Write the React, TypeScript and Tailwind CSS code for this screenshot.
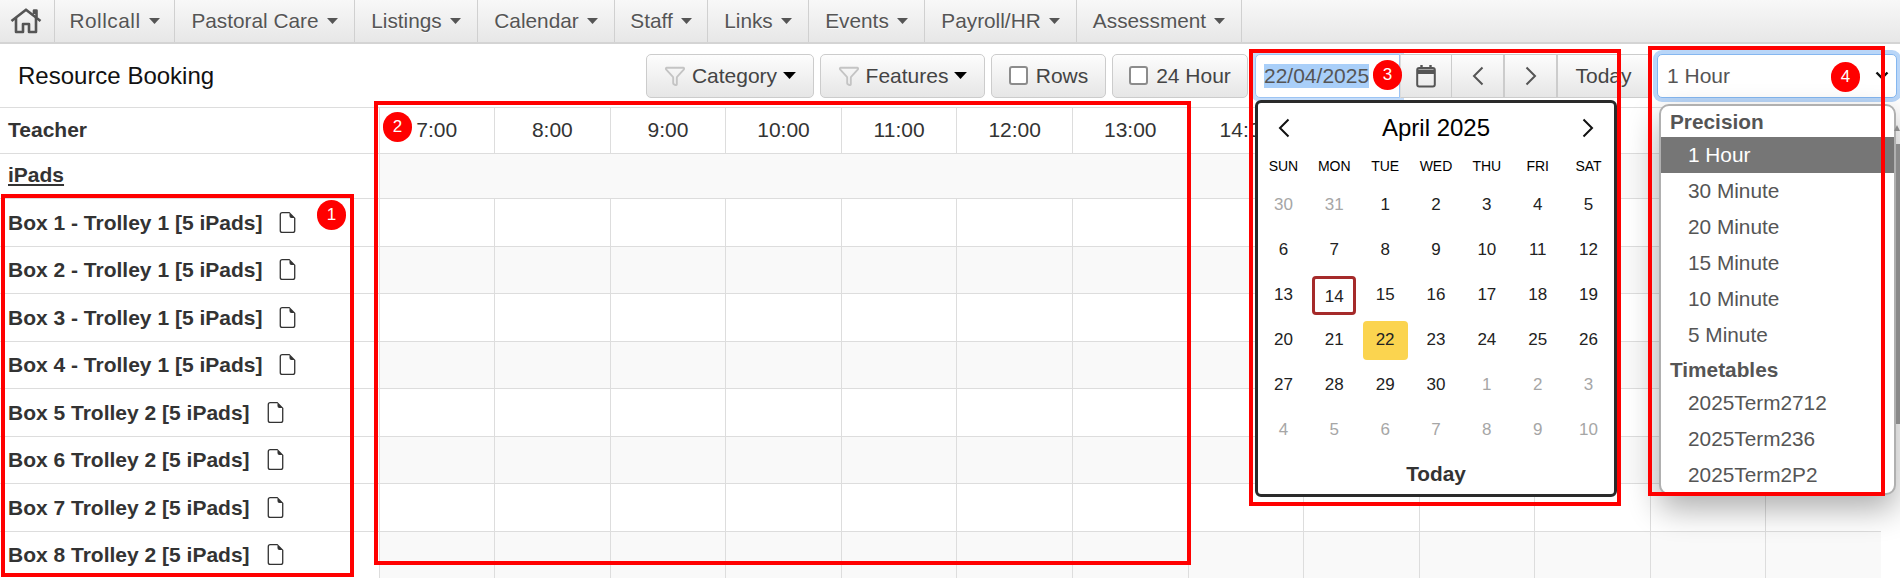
import { BsFileEarmark } from 'react-icons/bs';
import { Funnel } from 'lucide-react';

const navItems = [
  { label: 'Rollcall', width: 'w-[120px]', extra: 'tracking-[0.5px]' },
  { label: 'Pastoral Care', width: 'w-[180px]', extra: '' },
  { label: 'Listings', width: 'w-[123px]', extra: '' },
  { label: 'Calendar', width: 'w-[137px]', extra: '' },
  { label: 'Staff', width: 'w-[93px]', extra: '' },
  { label: 'Links', width: 'w-[101px]', extra: '' },
  { label: 'Events', width: 'w-[116px]', extra: '' },
  { label: 'Payroll/HR', width: 'w-[152px]', extra: '' },
  { label: 'Assessment', width: 'w-[165px]', extra: '' },
];

const hours = [7, 8, 9, 10, 11, 12, 13, 14, 15, 16, 17, 18, 19];

const resources = [
  'Box 1 - Trolley 1 [5 iPads]',
  'Box 2 - Trolley 1 [5 iPads]',
  'Box 3 - Trolley 1 [5 iPads]',
  'Box 4 - Trolley 1 [5 iPads]',
  'Box 5 Trolley 2 [5 iPads]',
  'Box 6 Trolley 2 [5 iPads]',
  'Box 7 Trolley 2 [5 iPads]',
  'Box 8 Trolley 2 [5 iPads]',
];

const weekDays = ['SUN', 'MON', 'TUE', 'WED', 'THU', 'FRI', 'SAT'];

const calendarDays = [
  [30, true], [31, true], [1, false], [2, false], [3, false], [4, false], [5, false],
  [6, false], [7, false], [8, false], [9, false], [10, false], [11, false], [12, false],
  [13, false], [14, false], [15, false], [16, false], [17, false], [18, false], [19, false],
  [20, false], [21, false], [22, false], [23, false], [24, false], [25, false], [26, false],
  [27, false], [28, false], [29, false], [30, false], [1, true], [2, true], [3, true],
  [4, true], [5, true], [6, true], [7, true], [8, true], [9, true], [10, true],
] as [number, boolean][];

const buttonClass =
  'flex h-[44px] items-center rounded-[5px] border border-[#ccc] bg-linear-to-b from-[#fdfdfd] to-[#e6e6e6] text-[#444]';

function Caret({ color, wide }: { color: string; wide?: boolean }) {
  return (
    <svg width={wide ? 13 : 11} height={wide ? 7 : 6} viewBox="0 0 11 6" className="shrink-0">
      <path d="M0 0h11L5.5 6z" fill={color} />
    </svg>
  );
}

function Chevron({ left, color = '#333' }: { left?: boolean; color?: string }) {
  return (
    <svg width="12" height="20" viewBox="0 0 12 20" fill="none">
      <path
        d={left ? 'M10.5 1.5 2 10l8.5 8.5' : 'M1.5 1.5 10 10l-8.5 8.5'}
        stroke={color}
        strokeWidth="2"
      />
    </svg>
  );
}

function Checkbox() {
  return <span className="block h-[19px] w-[19px] rounded-[3px] border-2 border-[#8c8c8c] bg-white" />;
}

function Badge({ n, className }: { n: number; className: string }) {
  return (
    <div
      className={`absolute z-40 flex h-[30px] w-[29px] items-center justify-center rounded-full bg-[#f00] text-[17px] text-white ${className}`}
    >
      {n}
    </div>
  );
}

function CalendarPopup() {
  return (
    <div className="absolute left-0 top-[46px] z-20 h-[397px] w-[362px] rounded-[6px] border-[3px] border-[#2a2a2a] bg-white">
      <div className="flex h-[50px] items-center justify-between pl-[20px] pr-[20px] text-[24px] text-black">
        <Chevron left color="#111" />
        <span>April 2025</span>
        <Chevron color="#111" />
      </div>
      <div className="grid h-[28px] grid-cols-7 items-center text-center text-[14px] text-black">
        {weekDays.map((d) => (
          <span key={d}>{d}</span>
        ))}
      </div>
      <div className="mt-[2px] grid auto-rows-[45px] grid-cols-7 text-[17px] text-[#222]">
        {calendarDays.map(([day, muted], i) => (
          <div key={i} className="flex items-center justify-center">
            {i === 15 ? (
              <span className="flex h-[39px] w-[44px] items-center justify-center rounded-[4px] border-[3px] border-[#a52a2a] pt-[3px]">
                {day}
              </span>
            ) : i === 23 ? (
              <span className="flex h-[39px] w-[45px] items-center justify-center rounded-[4px] bg-[#fbd44f]">{day}</span>
            ) : (
              <span className={muted ? 'text-[#a6a6a6]' : ''}>{day}</span>
            )}
          </div>
        ))}
      </div>
      <div className="flex h-[42px] items-center justify-center text-[20.8px] font-bold text-[#333]">Today</div>
    </div>
  );
}

function SelectPopup() {
  const item = 'flex h-[36px] items-center pl-[27px]';
  const group = 'flex items-center pl-[9px] pt-[2px] font-bold';
  return (
    <div className="absolute left-[2px] top-[50px] z-20 h-[391px] w-[237px] rounded-[10px] border-2 border-[#b0b0b0] bg-white text-[20.8px] text-[#555] shadow-[0_14px_32px_rgba(0,0,0,0.32)]">
      <div className={`${group} h-[31px]`}>Precision</div>
      <div className={`${item} bg-[#767676] text-white`}>1 Hour</div>
      <div className={item}>30 Minute</div>
      <div className={item}>20 Minute</div>
      <div className={item}>15 Minute</div>
      <div className={item}>10 Minute</div>
      <div className={item}>5 Minute</div>
      <div className={`${group} h-[32px]`}>Timetables</div>
      <div className={item}>2025Term2712</div>
      <div className={item}>2025Term236</div>
      <div className={item}>2025Term2P2</div>
      {/* native scrollbar peeking out on the right */}
      <svg width="6" height="6" viewBox="0 0 6 6" className="absolute -right-[6px] top-[19px]">
        <path d="M0 6 3 0l3 6z" fill="#8a8a8a" />
      </svg>
      <div className="absolute -right-[6px] top-[38px] h-[280px] w-[4px] bg-[#8a8a8a]" />
    </div>
  );
}

export default function App() {
  return (
    <div className="relative h-[580px] w-full overflow-hidden bg-white font-['Liberation_Sans',Arial,sans-serif] text-[21px] text-[#333]">
      {/* Top nav */}
      <nav className="flex h-[44px] border-b-2 border-[#d4d4d4] bg-linear-to-b from-[#f8f8f8] to-[#e7e7e7] text-[20.8px] text-[#555] [text-shadow:0_1px_0_rgba(255,255,255,0.8)]">
        <div className="flex w-[55px] items-center justify-center border-r border-[#d0d0d0] pr-[3px]">
          <svg width="32" height="26" viewBox="0 0 32 26" fill="none" stroke="#555" strokeWidth="2.6" strokeLinejoin="round">
            <path d="M1.5 13 16 1.7 30.5 13" />
            <path d="M24 6V2.5h2.5V9" />
            <path d="M6 10v14h7v-8h6v8h7V10" />
          </svg>
        </div>
        {navItems.map((n) => (
          <div key={n.label} className={`flex items-center justify-center gap-[8px] border-r border-[#d0d0d0] ${n.width}`}>
            <span className={n.extra}>{n.label}</span>
            <Caret color="#555" />
          </div>
        ))}
      </nav>

      {/* Toolbar */}
      <div className="flex h-[63px] items-center justify-between pl-[18px] pr-[3px]">
        <h1 className="text-[24px] text-[#111]">Resource Booking</h1>
        <div className="flex items-center">
          <div className={`${buttonClass} w-[168px] justify-center gap-[6px] text-[#333]`}>
            <Funnel size={22} color="#c4c4c4" strokeWidth={2} />
            <span>Category</span>
            <Caret color="#000" wide />
          </div>
          <div className={`${buttonClass} ml-[6px] w-[165px] justify-center gap-[6px] text-[#333]`}>
            <Funnel size={22} color="#c4c4c4" strokeWidth={2} />
            <span>Features</span>
            <Caret color="#000" wide />
          </div>
          <div className={`${buttonClass} ml-[6px] w-[115px] justify-center gap-[8px]`}>
            <Checkbox />
            <span>Rows</span>
          </div>
          <div className={`${buttonClass} ml-[6px] w-[136px] justify-center gap-[8px]`}>
            <Checkbox />
            <span>24 Hour</span>
          </div>

          {/* Date picker group */}
          <div className="relative ml-[7px] flex">
            <div className="flex h-[44px] w-[145px] items-center rounded-l-[5px] border border-[#9cc4f4] bg-white pl-[8px] text-[#555] shadow-[0_0_0_4px_#c4dcf9]">
              <span className="bg-[#a9cff9] leading-[24px]">22/04/2025</span>
            </div>
            <div className={`${buttonClass} relative z-10 w-[52px] justify-center rounded-none border-l-[#ddd]`}>
              <svg width="20" height="24" viewBox="0 0 20 24" fill="none">
                <rect x="1.2" y="4" width="17.6" height="18.5" rx="2" stroke="#555" strokeWidth="2" />
                <path d="M1.2 5.5h17.6v4.5H1.2z" fill="#555" />
                <path d="M5.5 1v4M14.5 1v4" stroke="#555" strokeWidth="2.4" />
              </svg>
            </div>
            <div className={`${buttonClass} relative z-10 w-[52px] justify-center rounded-none border-l-0`}>
              <Chevron left color="#555" />
            </div>
            <div className={`${buttonClass} relative z-10 w-[53px] justify-center rounded-none border-l-[#ccc]`}>
              <Chevron color="#555" />
            </div>
            <div className={`${buttonClass} relative z-10 w-[91px] justify-center rounded-none border-r-0 pl-[1px]`}>Today</div>
            <CalendarPopup />
          </div>

          {/* Precision select */}
          <div className="relative ml-[9px]">
            <div className="flex h-[44px] w-[240px] items-center justify-between rounded-[5px] border border-[#85b7f0] bg-white pl-[9px] pr-[7px] text-[#555] shadow-[0_0_0_4px_#b9d6f8]">
              <span>1 Hour</span>
              <svg width="14" height="9" viewBox="0 0 14 9" fill="none">
                <path d="M1.5 1.5 7 7l5.5-5.5" stroke="#111" strokeWidth="2.4" />
              </svg>
            </div>
            <SelectPopup />
          </div>
        </div>
      </div>

      {/* Booking grid */}
      <div className="grid w-[1881px] grid-cols-[378.5px_repeat(13,1fr)] grid-rows-[46px_45px_repeat(8,47.5px)]">
        <div className="flex items-center border-t border-[#ddd] pb-[2px] pl-[8px] font-bold">Teacher</div>
        {hours.map((h) => (
          <div key={h} className="flex items-center justify-center border-l border-t border-[#ddd] pb-[2px]">
            {/* later hours sit behind the open popups */}
            {h <= 14 ? `${h}:00` : ''}
          </div>
        ))}

        <div className="flex items-center border-t border-[#ddd] pb-[2px] pl-[8px] font-bold underline">iPads</div>
        <div className="col-span-13 border-l border-t border-[#ddd] bg-[#f9f9f9]" />

        {resources.map((name, r) => (
          <div key={name} className="contents">
            <div className="flex items-center gap-[15px] border-t border-[#ddd] pl-[8px] font-bold">
              <span>{name}</span>
              <BsFileEarmark size={21} color="#333" />
            </div>
            {hours.map((h) => (
              <div key={h} className={`border-l border-t border-[#ddd] ${r % 2 === 1 ? 'bg-[#f9f9f9]' : 'bg-white'}`} />
            ))}
          </div>
        ))}
      </div>

      {/* Red annotation boxes */}
      <div className="absolute left-[1px] top-[194px] z-30 h-[383px] w-[353px] border-4 border-[#f00]" />
      <div className="absolute left-[374px] top-[101px] z-30 h-[464px] w-[817px] border-4 border-[#f00]" />
      <div className="absolute left-[1249px] top-[49px] z-30 h-[457px] w-[372px] border-4 border-[#f00]" />
      <div className="absolute left-[1648px] top-[46px] z-30 h-[450px] w-[237px] border-4 border-[#f00]" />
      <Badge n={1} className="left-[317px] top-[200px]" />
      <Badge n={2} className="left-[383px] top-[112px]" />
      <Badge n={3} className="left-[1373px] top-[60px]" />
      <Badge n={4} className="left-[1831px] top-[62px]" />
    </div>
  );
}
